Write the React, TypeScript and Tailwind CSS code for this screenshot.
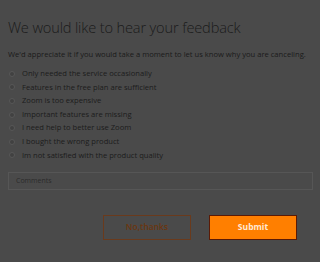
import React from "react";

const options = [
  "Only needed the service occasionally",
  "Features in the free plan are sufficient",
  "Zoom is too expensive",
  "Important features are missing",
  "I need help to better use Zoom",
  "I bought the wrong product",
  "Im not satisfied with the product quality",
];

export default function App() {
  return (
    <div
      className="w-[320px] h-[262px] bg-[#4a4a4a] overflow-hidden px-[8px] pt-[16px]"
      style={{ fontFamily: '"Open Sans", sans-serif' }}
    >
      <h1 className="text-[14.6px] leading-[22px] font-light text-[#1a1a1a] tracking-[-0.15px]">
        We would like to hear your feedback
      </h1>
      <p className="mt-[10px] text-[7.6px] leading-[12px] text-[#1a1a1a] whitespace-nowrap">
        We'd appreciate it if you would take a moment to let us know why you are canceling.
      </p>
      <ul className="mt-[7px] flex flex-col">
        {options.map((o) => (
          <li key={o} className="flex items-center h-[13.6px]">
            <span className="w-[6px] h-[6px] ml-[1px] rounded-full border border-[#575757] bg-[#414141]" />
            <span className="ml-[7px] text-[7.6px] text-[#1c1c1c]">{o}</span>
          </li>
        ))}
      </ul>
      <div className="mt-[10px] h-[18px] w-[305px] border border-[#565656] flex items-center px-[7px]">
        <span className="text-[7px] text-[#2a2a2a]">Comments</span>
      </div>
      <div className="mt-[25px] flex justify-end gap-[18px] pr-[15px]">
        <button className="w-[88px] h-[25px] border border-[#6a3a1c] text-[8.5px] font-semibold text-[#6a360f]">
          No,thanks
        </button>
        <button className="w-[88px] h-[25px] bg-[#ff7f00] border border-[#5a1a05] text-[8.5px] font-bold text-[#ffe9d6]">
          Submit
        </button>
      </div>
    </div>
  );
}
